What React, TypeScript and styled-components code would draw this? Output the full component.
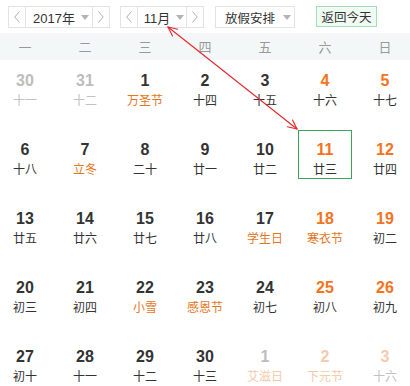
import { FC } from 'react'
import styled, { createGlobalStyle, css } from 'styled-components'

type Tone = 'normal' | 'weekend' | 'dim' | 'dimWeekend'

interface DayData {
  day: number
  lunar: string
  tone: Tone
  festival?: boolean
  selected?: boolean
}

const WEEKDAYS = ['一', '二', '三', '四', '五', '六', '日']

const d = (day: number, lunar: string, tone: Tone = 'normal', festival = false, selected = false): DayData => ({
  day,
  lunar,
  tone,
  festival,
  selected,
})

const DAYS: DayData[] = [
  d(30, '十一', 'dim'),
  d(31, '十二', 'dim'),
  d(1, '万圣节', 'normal', true),
  d(2, '十四'),
  d(3, '十五'),
  d(4, '十六', 'weekend'),
  d(5, '十七', 'weekend'),
  d(6, '十八'),
  d(7, '立冬', 'normal', true),
  d(8, '二十'),
  d(9, '廿一'),
  d(10, '廿二'),
  d(11, '廿三', 'weekend', false, true),
  d(12, '廿四', 'weekend'),
  d(13, '廿五'),
  d(14, '廿六'),
  d(15, '廿七'),
  d(16, '廿八'),
  d(17, '学生日', 'normal', true),
  d(18, '寒衣节', 'weekend', true),
  d(19, '初二', 'weekend'),
  d(20, '初三'),
  d(21, '初四'),
  d(22, '小雪', 'normal', true),
  d(23, '感恩节', 'normal', true),
  d(24, '初七'),
  d(25, '初八', 'weekend'),
  d(26, '初九', 'weekend'),
  d(27, '初十'),
  d(28, '十一'),
  d(29, '十二'),
  d(30, '十三'),
  d(1, '艾滋日', 'dim', true),
  d(2, '下元节', 'dimWeekend', true),
  d(3, '十六', 'dimWeekend'),
]

const GlobalStyle = createGlobalStyle`
  body {
    margin: 0;
    background: #fff;
    font-family: Arial, "Liberation Sans", "Noto Sans CJK SC", sans-serif;
    overflow: hidden;
  }
`

const ChevronLeft = () => (
  <svg width="6" height="12" viewBox="0 0 6 12">
    <polyline points="5.5,0.5 0.8,6 5.5,11.5" fill="none" stroke="#b0b0b0" strokeWidth="1" />
  </svg>
)

const ChevronRight = () => (
  <svg width="6" height="12" viewBox="0 0 6 12">
    <polyline points="0.5,0.5 5.2,6 0.5,11.5" fill="none" stroke="#b0b0b0" strokeWidth="1" />
  </svg>
)

const Caret = () => (
  <svg width="8" height="5" viewBox="0 0 8 5">
    <polygon points="0,0 8,0 4,5" fill="#b3b3b3" />
  </svg>
)

interface StepperProps {
  label: string
  width: number
}

const Stepper: FC<StepperProps> = ({ label, width }) => (
  <SelectBox>
    <ArrowCell>
      <ChevronLeft />
    </ArrowCell>
    <SelectLabel $width={width}>
      {label}
      <Caret />
    </SelectLabel>
    <ArrowCell $right>
      <ChevronRight />
    </ArrowCell>
  </SelectBox>
)

const Calendar: FC = () => {
  return (
    <Page>
      <GlobalStyle />
      <Toolbar>
        <Stepper label="2017年" width={68} />
        <Stepper label="11月" width={50} />
        <HolidaySelect>
          放假安排
          <Caret />
        </HolidaySelect>
        <TodayButton>返回今天</TodayButton>
      </Toolbar>
      <WeekBar>
        {WEEKDAYS.map((w) => (
          <WeekLabel key={w}>{w}</WeekLabel>
        ))}
      </WeekBar>
      <DayGrid>
        {DAYS.map((item, i) => (
          <Cell key={i}>
            <DayBox $selected={item.selected}>
              <DayNumber $tone={item.tone}>{item.day}</DayNumber>
              <Lunar $tone={item.tone} $festival={item.festival}>
                {item.lunar}
              </Lunar>
            </DayBox>
          </Cell>
        ))}
      </DayGrid>
      <Pointer width="410" height="386" viewBox="0 0 410 386">
        <g stroke="#e5262c" strokeWidth="1.1" fill="none" strokeLinecap="round">
          <line x1="168" y1="27" x2="297" y2="129" />
          <polyline points="172.5,35.9 168,27 177.7,29.3" />
          <polyline points="292.5,120.1 297,129 287.3,126.7" />
        </g>
      </Pointer>
    </Page>
  )
}

export default Calendar

const Page = styled.div`
  position: relative;
  width: 410px;
  height: 386px;
  overflow: hidden;
`

const Toolbar = styled.div`
  display: flex;
  align-items: flex-start;
  height: 33px;
  padding: 6px 0 0 8px;
  box-sizing: border-box;
  white-space: nowrap;
`

const SelectBox = styled.div`
  display: flex;
  height: 22px;
  border: 1px solid #e3e3e3;
  box-sizing: border-box;
  margin-right: 10px;
  background: #fff;
`

const ArrowCell = styled.div<{ $right?: boolean }>`
  width: 16px;
  display: flex;
  align-items: center;
  justify-content: center;
  ${({ $right }) =>
    $right
      ? css`
          border-left: 1px solid #e3e3e3;
        `
      : css`
          border-right: 1px solid #e3e3e3;
        `}
`

const SelectLabel = styled.div<{ $width: number }>`
  width: ${({ $width }) => $width - 2}px;
  display: flex;
  align-items: center;
  justify-content: center;
  gap: 6px;
  padding-left: 4px;
  box-sizing: border-box;
  font-size: 13px;
  color: #333;
`

const HolidaySelect = styled.div`
  display: flex;
  align-items: center;
  gap: 8px;
  height: 22px;
  width: 80px;
  box-sizing: border-box;
  padding-left: 9px;
  margin-left: 1px;
  border: 1px solid #e3e3e3;
  font-size: 12.5px;
  color: #333;
`

const TodayButton = styled.div`
  margin-left: 21px;
  height: 21px;
  width: 61px;
  box-sizing: border-box;
  display: flex;
  align-items: center;
  justify-content: center;
  border: 1px solid #a8dcb8;
  background: #effaf2;
  font-size: 12.5px;
  color: #333;
`

const WeekBar = styled.div`
  display: grid;
  grid-template-columns: repeat(7, 60px);
  height: 27px;
  margin-left: -5px;
  background: #f4f7f8;
  align-items: center;
`

const WeekLabel = styled.div`
  text-align: center;
  font-size: 13px;
  color: #999;
`

const DayGrid = styled.div`
  display: grid;
  grid-template-columns: repeat(7, 60px);
  grid-auto-rows: 69px;
  margin-left: -5px;
`

const Cell = styled.div`
  display: flex;
  justify-content: center;
`

const DayBox = styled.div<{ $selected?: boolean }>`
  width: 54px;
  height: 49px;
  margin-top: 1px;
  box-sizing: border-box;
  padding-top: 10px;
  display: flex;
  flex-direction: column;
  align-items: center;
  border: 1px solid ${({ $selected }) => ($selected ? '#3aa55a' : 'transparent')};
`

const numberColors: Record<Tone, string> = {
  normal: '#333',
  weekend: '#f5731c',
  dim: '#bdbdbd',
  dimWeekend: '#f7c9ad',
}

const DayNumber = styled.div<{ $tone: Tone }>`
  font-family: Arial, "Liberation Sans", sans-serif;
  font-weight: bold;
  font-size: 16px;
  line-height: 18px;
  color: ${({ $tone }) => numberColors[$tone]};
`

const Lunar = styled.div<{ $tone: Tone; $festival?: boolean }>`
  margin-top: 2px;
  font-size: 12px;
  line-height: 16px;
  font-family: "Noto Sans CJK SC", sans-serif;
  color: ${({ $tone, $festival }) => {
    if ($tone === 'dim' || $tone === 'dimWeekend') return $festival ? '#f2cba9' : '#c2c2c2'
    return $festival ? '#e6761e' : '#333'
  }};
`

const Pointer = styled.svg`
  position: absolute;
  top: 0;
  left: 0;
  pointer-events: none;
`
